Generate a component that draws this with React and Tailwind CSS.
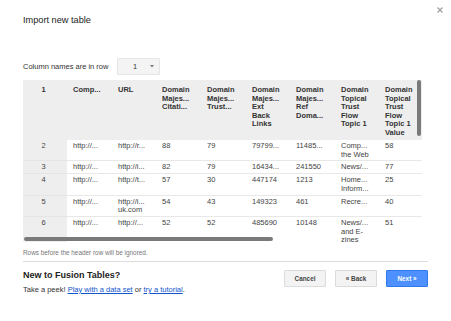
import React from "react";

const widths = ["w-[45px]", "w-[44px]", "w-[45px]", "w-[45px]", "w-[44px]", "w-[45px]", "w-[44px]", "w-[45px]"];

const headers = [
  ["Comp..."],
  ["URL"],
  ["Domain", "Majes...", "Citati..."],
  ["Domain", "Majes...", "Trust..."],
  ["Domain", "Majes...", "Ext", "Back", "Links"],
  ["Domain", "Majes...", "Ref", "Doma..."],
  ["Domain", "Topical", "Trust", "Flow", "Topic 1"],
  ["Domain", "Topical", "Trust", "Flow", "Topic 1", "Value"],
];

const rows = [
  ["2", ["http://..."], ["http://r..."], ["88"], ["79"], ["79799..."], ["11485..."], ["Comp...", "the Web"], ["58"]],
  ["3", ["http://..."], ["http://i..."], ["82"], ["79"], ["16434..."], ["241550"], ["News/..."], ["77"]],
  ["4", ["http://..."], ["http://t..."], ["57"], ["30"], ["447174"], ["1213"], ["Home...", "Inform..."], ["25"]],
  ["5", ["http://..."], ["http://i...", "uk.com"], ["54"], ["43"], ["149323"], ["461"], ["Recre..."], ["40"]],
  ["6", ["http://..."], ["http://..."], ["52"], ["52"], ["485690"], ["10148"], ["News/...", "and E-", "zines"], ["51"]],
];

function Lines({ lines }) {
  return (
    <>
      {lines.map((l, i) => (
        <div key={i} className="whitespace-nowrap">
          {l}
        </div>
      ))}
    </>
  );
}

export default function App() {
  return (
    <div
      className="relative w-[451px] h-[321px] bg-white px-[23px] overflow-hidden"
      style={{ fontFamily: '"Liberation Sans", Arial, sans-serif' }}
    >
      {/* close */}
      <svg
        className="absolute left-[437px] top-[7px]"
        width="6"
        height="6"
        viewBox="0 0 6 6"
      >
        <path d="M0.5 0.5 L5.5 5.5 M5.5 0.5 L0.5 5.5" stroke="#a0a0a0" strokeWidth="1.2" />
      </svg>

      <div className="pt-[14px] h-[26px] text-[9.2px] leading-[12px] text-[#222]">
        Import new table
      </div>

      <div className="mt-[32px] flex items-center h-[17px]">
        <div className="w-[94px] text-[7.5px] leading-[9px] text-[#333]">
          Column names are in row
        </div>
        <div className="w-[43px] h-[17px] bg-[#f4f4f4] border border-[#e6e6e6] rounded-[1px] flex items-center pl-[15px]">
          <span className="text-[7.5px] leading-[9px] text-[#333]">1</span>
          <svg className="ml-[13px]" width="4" height="3" viewBox="0 0 4 3">
            <path d="M0 0 L4 0 L2 2.5 Z" fill="#777" />
          </svg>
        </div>
      </div>

      {/* table viewport */}
      <div className="relative mt-[5px] w-[399px] h-[162px] overflow-hidden">
        <div className="w-[700px]">
          {/* header */}
          <div className="flex h-[60px] bg-[#eeeeee] text-[7.5px] leading-[8.6px] font-bold text-[#333]">
            <div className="w-[44px] shrink-0 pt-[6px] text-center pr-[3px]">1</div>
            {headers.map((h, i) => (
              <div key={i} className={`${widths[i]} shrink-0 pt-[6px] pl-[6px]`}>
                <Lines lines={h} />
              </div>
            ))}
          </div>
          {/* body */}
          {rows.map((r, ri) => (
            <div key={ri} className="flex text-[7.5px] leading-[8.7px] text-[#444]">
              <div className="w-[44px] shrink-0 bg-[#eeeeee] text-center pr-[3px] pt-[2px] pb-[1px] border-b border-[#e4e4e4]">
                {r[0]}
              </div>
              <div className="flex border-b border-[#e8e8e8]">
                {r.slice(1).map((c, ci) => (
                  <div key={ci} className={`${widths[ci]} shrink-0 pl-[6px] pt-[2px] pb-[1px]`}>
                    <Lines lines={c} />
                  </div>
                ))}
              </div>
            </div>
          ))}
        </div>
        {/* scrollbars */}
        <div className="absolute left-[394px] top-0 w-[4px] h-[56px] rounded-[2px] bg-[#7a7a7a]" />
        <div className="absolute left-[1px] top-[157px] w-[249px] h-[4px] rounded-[2px] bg-[#7a7a7a]" />
      </div>

      <div className="mt-[7px] text-[6.4px] leading-[8px] text-[#777]">
        Rows before the header row will be ignored.
      </div>

      <div className="mt-[4px] w-[405px] border-t border-[#dcdcdc]" />

      <div className="flex w-[405px] justify-between">
        <div>
          <div className="mt-[7px] text-[9px] leading-[12px] font-bold text-[#222]">
            New to Fusion Tables?
          </div>
          <div className="mt-[4px] text-[7.5px] leading-[10px] text-[#333]">
            Take a peek!{" "}
            <span className="text-[#1155cc] underline">Play with a data set</span> or{" "}
            <span className="text-[#1155cc] underline">try a tutorial</span>.
          </div>
        </div>
        <div className="mt-[8px] flex gap-[9px]">
          <div className="w-[42px] h-[17px] flex items-center justify-center bg-[#f3f3f3] border border-[#dcdcdc] rounded-[1px] text-[6.4px] font-bold text-[#444]">
            Cancel
          </div>
          <div className="w-[42px] h-[17px] flex items-center justify-center bg-[#f3f3f3] border border-[#dcdcdc] rounded-[1px] text-[6.4px] font-bold text-[#444]">
            « Back
          </div>
          <div className="w-[42px] h-[17px] flex items-center justify-center bg-[#4d90fe] border border-[#3079ed] rounded-[1px] text-[6.4px] font-bold text-white">
            Next »
          </div>
        </div>
      </div>
    </div>
  );
}
